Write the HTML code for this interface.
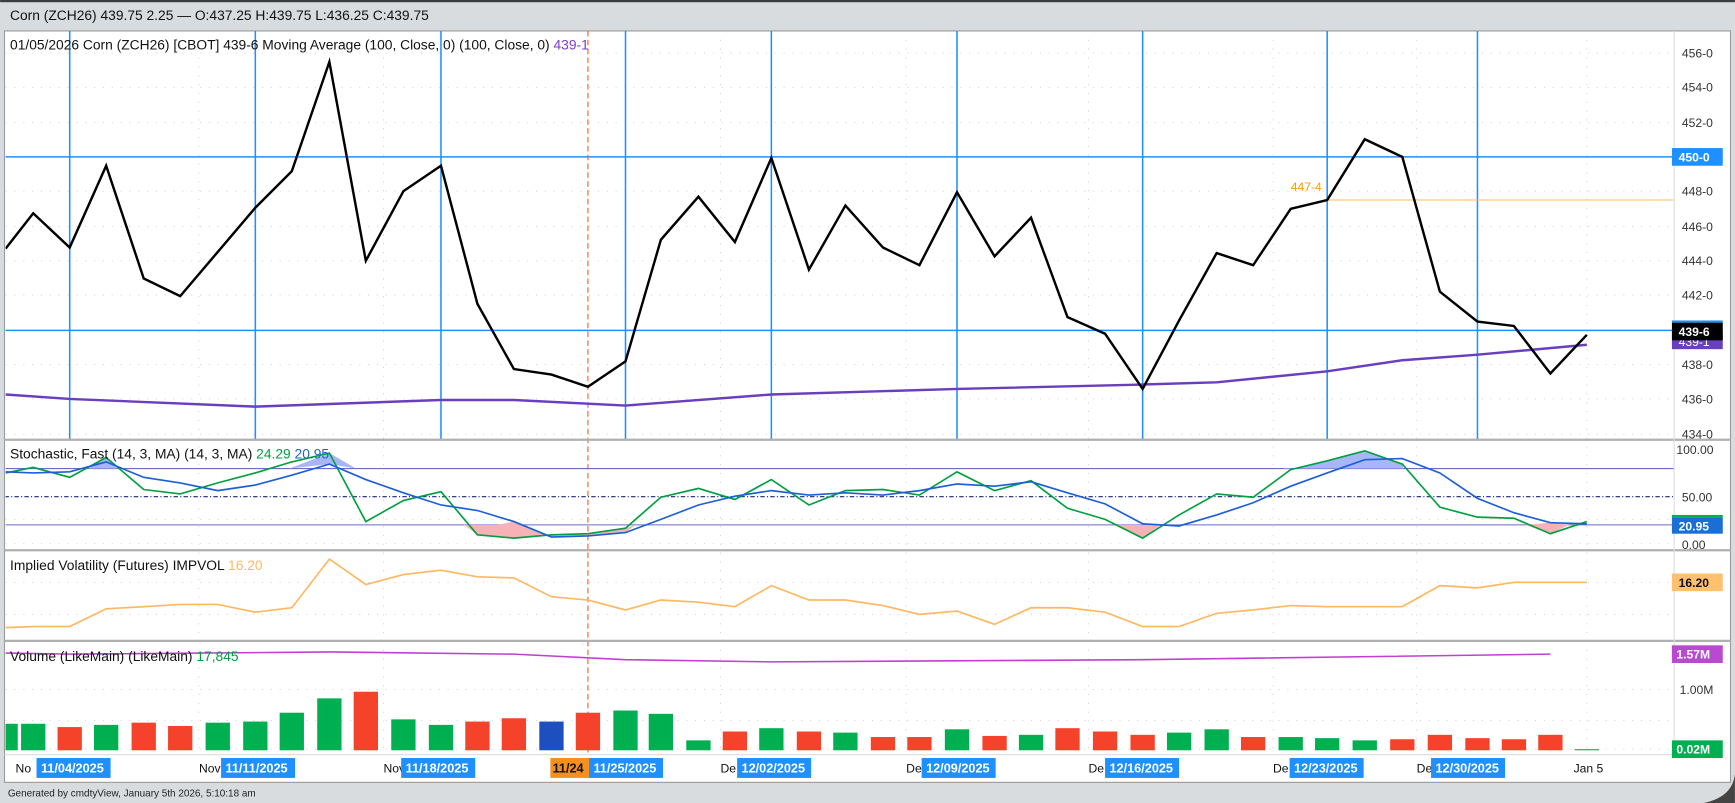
<!DOCTYPE html>
<html><head><meta charset="utf-8"><style>
html,body{margin:0;padding:0;background:#d9dcdf;}
svg{display:block;font-family:"Liberation Sans",sans-serif;}
</style></head><body>
<svg width="1735" height="803" viewBox="0 0 1570 726.7" xmlns="http://www.w3.org/2000/svg">
<defs><clipPath id="c"><rect x="5" y="28" width="1510" height="680"/></clipPath></defs>
<rect x="0" y="0" width="1570" height="727" fill="#d9dcdf"/>
<rect x="0" y="0" width="1570" height="2" fill="#3a3d40"/>
<text x="9" y="18" font-size="12.5" fill="#111">Corn (ZCH26) 439.75 2.25 — O:437.25 H:439.75 L:436.25 C:439.75</text>
<rect x="4" y="28" width="1562" height="680" fill="#fff" stroke="#9a9a9a" stroke-width="1"/>
<path d="M1540 727 Q1568 722 1570 700 L1570 727 Z" fill="#444"/>
<g clip-path="url(#c)">
<g stroke="#cfcfcf" stroke-width="0.8" stroke-dasharray="1 7">
<path d="M5 48H1515M5 79H1515M5 111H1515M5 173H1515M5 205H1515M5 236H1515M5 267H1515M5 330H1515M5 361H1515M5 393H1515"/>
<path d="M5 470H1515M5 492H1515M5 527H1515M5 556H1515M5 624H1515M5 652H1515M5 678H1515"/>
<path d="M180 28V683M347 28V683M652 28V683M820 28V683M985 28V683M1152 28V683M1282 28V683M1436 28V683"/>
</g>
<g stroke="#1e90ff" stroke-width="1.4">
<path d="M63 28V398M231 28V398M399 28V398M566 28V398M698 28V398M866 28V398M1034 28V398M1201 28V398M1337 28V398"/>
<path d="M4 142H1515M4 299H1515"/>
</g>
<path d="M532 28V683" stroke="#f06020" stroke-width="1" stroke-dasharray="5 3"/>
<path d="M1201 181H1515" stroke="#ffb860" stroke-width="1"/>
<text x="1168" y="173" font-size="11" fill="#f5a000">447-4</text>
<polyline fill="none" stroke="#6a3fbf" stroke-width="2.2" points="5,357 63,361 231,368 399,362 465,362 566,367 698,357 866,352 1034,348 1101,346 1201,336 1269,326 1337,321 1436,312"/>
<polyline fill="none" stroke="#000" stroke-width="2.2" points="5,225 30,193 63,224 96,150 130,252 163,268 197,228 231,188 264,155 298,56 331,236 365,173 399,150 432,275 465,334 499,339 532,350 566,327 598,217 632,178 665,219 698,143 732,244 765,186 799,224 832,240 866,174 900,232 933,197 966,287 1000,302 1034,352 1067,290 1101,229 1134,240 1168,189 1201,181 1235,126 1269,142 1303,264 1337,291 1370,295 1403,338 1436,303"/>
<g stroke="#6b6bc8" stroke-width="1"><path d="M4 424H1515M4 475H1515"/></g>
<path d="M4 449.5H1515" stroke="#1a237e" stroke-width="1" stroke-dasharray="4 2 1 2"/>
<polygon fill="#a9b6f5" points="80,424 96,414 106,424"/>
<polygon fill="#a9b6f5" points="262,424 298,410 322,424 298,420"/>
<polygon fill="#a9b6f5" points="1160,424 1168,425 1201,417 1235,408 1269,420 1270,424"/>
<polygon fill="#f7b2b8" points="420,475 432,484 465,487 499,484 532,483 566,478 575,475 566,482 532,485 499,486 465,472 450,475"/>
<polygon fill="#f7b2b8" points="1010,475 1034,487 1050,475"/>
<polygon fill="#f7b2b8" points="1380,475 1403,483 1420,475 1403,473"/>
<polyline fill="none" stroke="#00a040" stroke-width="1.5" points="5,428 30,423 63,432 96,414 130,443 163,447 197,437 231,428 264,418 298,410 331,472 365,453 399,445 432,484 465,487 499,484 532,483 566,478 598,450 632,442 665,452 698,434 732,457 765,444 799,443 832,448 866,427 900,444 933,435 966,460 1000,470 1034,487 1067,466 1101,447 1134,450 1168,425 1201,417 1235,408 1269,420 1303,459 1337,468 1370,469 1403,483 1436,472"/>
<polyline fill="none" stroke="#1e5fd6" stroke-width="1.5" points="5,427 30,428 63,427 96,418 130,432 163,437 197,444 231,439 264,430 298,420 331,434 365,446 399,457 432,462 465,472 499,486 532,485 566,482 598,470 632,457 665,449 698,444 732,448 765,446 799,448 832,444 866,438 900,440 933,436 966,446 1000,456 1034,474 1067,476 1101,466 1134,455 1168,440 1201,428 1235,416 1269,415 1303,428 1337,451 1370,464 1403,473 1436,474"/>
<polyline fill="none" stroke="#ffb860" stroke-width="1.5" points="5,568 30,567 63,567 96,551 130,549 163,547 197,547 231,554 264,550 298,506 331,529 365,520 399,516 432,522 465,523 499,540 532,543 566,552 598,543 632,545 665,549 698,530 732,543 765,543 799,548 832,556 866,553 900,565 933,550 966,550 1000,554 1034,567 1067,567 1101,555 1134,552 1168,548 1201,549 1235,549 1269,549 1303,530 1337,532 1370,527 1403,527 1436,527"/>
<g>
<rect x="-6" y="655" width="22" height="24" fill="#00b050"/>
<rect x="19" y="655" width="22" height="24" fill="#00b050"/>
<rect x="52" y="658" width="22" height="21" fill="#f4432a"/>
<rect x="85" y="656" width="22" height="23" fill="#00b050"/>
<rect x="119" y="654" width="22" height="25" fill="#f4432a"/>
<rect x="152" y="657" width="22" height="22" fill="#f4432a"/>
<rect x="186" y="654" width="22" height="25" fill="#00b050"/>
<rect x="220" y="653" width="22" height="26" fill="#00b050"/>
<rect x="253" y="645" width="22" height="34" fill="#00b050"/>
<rect x="287" y="632" width="22" height="47" fill="#00b050"/>
<rect x="320" y="626" width="22" height="53" fill="#f4432a"/>
<rect x="354" y="651" width="22" height="28" fill="#00b050"/>
<rect x="388" y="656" width="22" height="23" fill="#00b050"/>
<rect x="421" y="653" width="22" height="26" fill="#f4432a"/>
<rect x="454" y="650" width="22" height="29" fill="#f4432a"/>
<rect x="488" y="653" width="22" height="26" fill="#1e4fbf"/>
<rect x="521" y="645" width="22" height="34" fill="#f4432a"/>
<rect x="555" y="643" width="22" height="36" fill="#00b050"/>
<rect x="587" y="646" width="22" height="33" fill="#00b050"/>
<rect x="621" y="670" width="22" height="9" fill="#00b050"/>
<rect x="654" y="662" width="22" height="17" fill="#f4432a"/>
<rect x="687" y="659" width="22" height="20" fill="#00b050"/>
<rect x="721" y="662" width="22" height="17" fill="#f4432a"/>
<rect x="754" y="663" width="22" height="16" fill="#00b050"/>
<rect x="788" y="667" width="22" height="12" fill="#f4432a"/>
<rect x="821" y="667" width="22" height="12" fill="#f4432a"/>
<rect x="855" y="660" width="22" height="19" fill="#00b050"/>
<rect x="889" y="666" width="22" height="13" fill="#f4432a"/>
<rect x="922" y="665" width="22" height="14" fill="#00b050"/>
<rect x="955" y="659" width="22" height="20" fill="#f4432a"/>
<rect x="989" y="662" width="22" height="17" fill="#f4432a"/>
<rect x="1023" y="665" width="22" height="14" fill="#f4432a"/>
<rect x="1056" y="663" width="22" height="16" fill="#00b050"/>
<rect x="1090" y="660" width="22" height="19" fill="#00b050"/>
<rect x="1123" y="667" width="22" height="12" fill="#f4432a"/>
<rect x="1157" y="667" width="22" height="12" fill="#00b050"/>
<rect x="1190" y="668" width="22" height="11" fill="#00b050"/>
<rect x="1224" y="670" width="22" height="9" fill="#00b050"/>
<rect x="1258" y="669" width="22" height="10" fill="#f4432a"/>
<rect x="1292" y="665" width="22" height="14" fill="#f4432a"/>
<rect x="1326" y="668" width="22" height="11" fill="#f4432a"/>
<rect x="1359" y="669" width="22" height="10" fill="#f4432a"/>
<rect x="1392" y="665" width="22" height="14" fill="#f4432a"/>
<rect x="1425" y="678" width="22" height="1" fill="#00b050"/>
</g>
<polyline fill="none" stroke="#c040d0" stroke-width="1.4" points="5,591 63,592 300,590 465,592 566,597 698,599 1034,597 1403,592"/>
</g>
<g stroke="#b0b0b0" stroke-width="2">
<path d="M4 398H1566M4 498H1566M4 580H1566"/>
</g>
<path d="M4 683H1515" stroke="#ddd" stroke-width="1"/>
<path d="M1515 28V683" stroke="#ddd" stroke-width="1"/>
<text x="9" y="45" font-size="12.5" fill="#111">01/05/2026 Corn (ZCH26) [CBOT] 439-6 Moving Average (100, Close, 0) (100, Close, 0) <tspan fill="#7a3fd0">439-1</tspan></text>
<g font-size="11" fill="#333">
<text x="1522" y="52">456-0</text><text x="1522" y="83">454-0</text><text x="1522" y="115">452-0</text>
<text x="1522" y="177">448-0</text><text x="1522" y="209">446-0</text><text x="1522" y="240">444-0</text>
<text x="1522" y="271">442-0</text><text x="1522" y="334">438-0</text><text x="1522" y="365">436-0</text><text x="1522" y="397">434-0</text>
</g>
<rect x="1513" y="134" width="46" height="16" fill="#1e90ff"/>
<text x="1519" y="146" font-size="11" fill="#fff" font-weight="bold">450-0</text>
<rect x="1513" y="300" width="46" height="16" fill="#6a3fbf"/>
<text x="1519" y="313" font-size="11" fill="#fff">439-1</text>
<rect x="1513" y="290" width="46" height="2" fill="#1e90ff"/>
<rect x="1513" y="292" width="46" height="16" fill="#000"/>
<text x="1519" y="304" font-size="11" fill="#fff" font-weight="bold">439-6</text>
<text x="9" y="415" font-size="12.5" fill="#111">Stochastic, Fast (14, 3, MA)  (14, 3, MA) <tspan fill="#00a040">24.29</tspan> <tspan fill="#1e5fd6">20.95</tspan></text>
<g font-size="11" fill="#333"><text x="1517" y="411">100.00</text><text x="1522" y="454">50.00</text><text x="1522" y="497">0.00</text></g>
<rect x="1513" y="466" width="46" height="2" fill="#00b050"/>
<rect x="1513" y="468" width="46" height="15" fill="#1a6fd6"/>
<text x="1519" y="480" font-size="11" fill="#fff" font-weight="bold">20.95</text>
<text x="9" y="516" font-size="12.5" fill="#111">Implied Volatility (Futures)  IMPVOL <tspan fill="#ffb860">16.20</tspan></text>
<rect x="1513" y="519" width="46" height="16" fill="#ffc070"/>
<text x="1519" y="531" font-size="11" fill="#111" font-weight="bold">16.20</text>
<text x="9" y="598" font-size="12.5" fill="#111">Volume (LikeMain)  (LikeMain) <tspan fill="#00a040">17,845</tspan></text>
<rect x="1513" y="584" width="46" height="16" fill="#b84ad0"/>
<text x="1517" y="596" font-size="11" fill="#fff" font-weight="bold">1.57M</text>
<text x="1520" y="628" font-size="11" fill="#333">1.00M</text>
<rect x="1513" y="670" width="46" height="16" fill="#00b050"/>
<text x="1517" y="682" font-size="11" fill="#fff" font-weight="bold">0.02M</text>
<g font-size="11" fill="#111">
<text x="14" y="699">No</text><text x="180" y="699">Nov</text><text x="347" y="699">Nov</text>
<text x="652" y="699">De</text><text x="820" y="699">De</text><text x="985" y="699">De</text>
<text x="1152" y="699">De</text><text x="1282" y="699">De</text><text x="1424" y="699">Jan 5</text>
</g>
<g font-size="11.5" fill="#fff" font-weight="bold">
<rect x="33" y="686" width="67" height="18" fill="#1e90ff"/><text x="37" y="699">11/04/2025</text>
<rect x="200" y="686" width="67" height="18" fill="#1e90ff"/><text x="204" y="699">11/11/2025</text>
<rect x="363" y="686" width="67" height="18" fill="#1e90ff"/><text x="367" y="699">11/18/2025</text>
<rect x="498" y="686" width="36" height="18" fill="#f5901e"/><text x="500" y="699" fill="#111">11/24</text>
<rect x="533" y="686" width="67" height="18" fill="#1e90ff"/><text x="537" y="699">11/25/2025</text>
<rect x="667" y="686" width="67" height="18" fill="#1e90ff"/><text x="671" y="699">12/02/2025</text>
<rect x="834" y="686" width="67" height="18" fill="#1e90ff"/><text x="838" y="699">12/09/2025</text>
<rect x="1000" y="686" width="67" height="18" fill="#1e90ff"/><text x="1004" y="699">12/16/2025</text>
<rect x="1167" y="686" width="67" height="18" fill="#1e90ff"/><text x="1171" y="699">12/23/2025</text>
<rect x="1295" y="686" width="67" height="18" fill="#1e90ff"/><text x="1299" y="699">12/30/2025</text>
</g>
<text x="7" y="721" font-size="9" fill="#222">Generated by cmdtyView, January 5th 2026, 5:10:18 am</text>
</svg>
</body></html>
